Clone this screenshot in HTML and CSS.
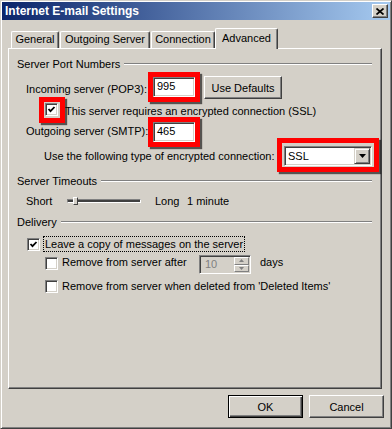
FILE: index.html
```html
<!DOCTYPE html>
<html lang="en">
<head>
  <meta charset="UTF-8">
  <title>Internet E-mail Settings</title>
  <link rel="stylesheet" href="styles.css">
</head>
<body>
<div class="window">
  <div class="titlebar">
    <span class="title">Internet E-mail Settings</span>
    <span class="close">
      <svg width="8" height="7" viewBox="0 0 8 7"><path d="M0.5 0.5 L7.5 6.5 M7.5 0.5 L0.5 6.5" stroke="#000" stroke-width="1.7" fill="none"/></svg>
    </span>
  </div>

  <div class="tabs">
    <div class="tab tab-general">General</div>
    <div class="tab tab-outgoing">Outgoing Server</div>
    <div class="tab tab-connection">Connection</div>
    <div class="tab tab-advanced active">Advanced</div>
  </div>

  <div class="panel">
    <!-- server port numbers -->
    <div class="group g-ports"><span>Server Port Numbers</span><i class="etch"></i></div>

    <div class="row row-in">
      <span class="lbl lbl-port lbl-in">Incoming server (POP3):</span>
      <span class="mark mark-port"><span class="field">995</span></span>
      <span class="btn btn-defaults">Use Defaults</span>
    </div>

    <div class="row row-ssl">
      <span class="mark mark-check"><span class="check on"><svg width="9" height="9" viewBox="0 0 9 9"><polyline points="1.5,4 3.5,6.2 7.5,2" stroke="#000" stroke-width="1.8" fill="none"/></svg></span></span>
      <span class="lbl lbl-ssl">This server requires an encrypted connection (SSL)</span>
    </div>

    <div class="row row-out">
      <span class="lbl lbl-port lbl-out">Outgoing server (SMTP):</span>
      <span class="mark mark-port"><span class="field">465</span></span>
    </div>

    <div class="row row-type">
      <span class="lbl lbl-type">Use the following type of encrypted connection:</span>
      <span class="mark mark-select">
        <span class="select">
          <span class="select-text">SSL</span>
          <span class="drop"><svg width="7" height="4" viewBox="0 0 7 4"><path d="M0 0 H7 L3.5 4 Z" fill="#000"/></svg></span>
        </span>
      </span>
    </div>

    <!-- server timeouts -->
    <div class="group g-timeouts"><span>Server Timeouts</span><i class="etch"></i></div>

    <div class="row row-slider">
      <span class="lbl lbl-short">Short</span>
      <span class="slider"><span class="track"></span><span class="thumb"></span></span>
      <span class="lbl lbl-long">Long</span>
      <span class="lbl">1 minute</span>
    </div>

    <!-- delivery -->
    <div class="group g-delivery"><span>Delivery</span><i class="etch"></i></div>

    <div class="row row-leave">
      <span class="check on"><svg width="9" height="9" viewBox="0 0 9 9"><polyline points="1.5,4 3.5,6.2 7.5,2" stroke="#000" stroke-width="1.8" fill="none"/></svg></span>
      <span class="lbl focus">Leave a copy of messages on the server</span>
    </div>

    <div class="row row-after">
      <span class="check"></span>
      <span class="lbl lbl-after">Remove from server after</span>
      <span class="spin">
        <span class="spin-text">10</span>
        <span class="spin-btns">
          <span class="spin-btn"><svg width="5" height="3" viewBox="0 0 5 3"><path d="M2.5 0 L5 3 H0 Z" fill="#808080"/></svg></span>
          <span class="spin-btn"><svg width="5" height="3" viewBox="0 0 5 3"><path d="M0 0 H5 L2.5 3 Z" fill="#808080"/></svg></span>
        </span>
      </span>
      <span class="lbl lbl-days">days</span>
    </div>

    <div class="row row-deleted">
      <span class="check"></span>
      <span class="lbl lbl-deleted">Remove from server when deleted from 'Deleted Items'</span>
    </div>
  </div>

  <div class="footer">
    <span class="btn btn-ok">OK</span>
    <span class="btn btn-cancel">Cancel</span>
  </div>
</div>
</body>
</html>
```

FILE: styles.css
```css
body {
  margin: 0;
  background: #d4d0c8;
  font-family: "Liberation Sans", Arial, sans-serif;
  font-size: 11px;
  color: #000;
}

.window {
  width: 392px;
  height: 429px;
  box-sizing: border-box;
  padding: 1px;
  background: #d4d0c8;
  border: 1px solid;
  border-color: #d4d0c8 #404040 #404040 #d4d0c8;
  box-shadow: inset 1px 1px 0 #fff, inset -1px -1px 0 #808080;
}

/* title bar */
.titlebar {
  height: 18px;
  display: flex;
  align-items: center;
  justify-content: space-between;
  padding: 0 2px 0 3px;
  background: linear-gradient(to right, #0a246a, #a6caf0);
}
.title {
  color: #fff;
  font-weight: bold;
  font-size: 12px;
  line-height: 14px;
}
.close {
  width: 16px;
  height: 14px;
  box-sizing: border-box;
  display: flex;
  align-items: center;
  justify-content: center;
  background: #d4d0c8;
  border: 1px solid;
  border-color: #fff #404040 #404040 #fff;
  box-shadow: inset -1px -1px 0 #808080;
}

/* tabs */
.tabs {
  display: flex;
  align-items: flex-end;
  height: 21px;
  margin: 8px 0 -1px 9px;
  position: relative;
  z-index: 1;
}
.tab {
  height: 17px;
  box-sizing: border-box;
  margin-bottom: 1px;
  border: 1px solid;
  border-color: #fff #404040 transparent #fff;
  border-bottom: none;
  box-shadow: inset -1px 0 0 #808080;
  border-radius: 2px 2px 0 0;
  text-align: center;
  line-height: 15px;
  background: #d4d0c8;
}
.tab-general { width: 48px; margin-right: 1px; }
.tab-outgoing { width: 90px; margin-right: 1px; }
.tab-connection { width: 64px; }
.tab.active {
  width: 63px;
  height: 21px;
  margin-bottom: 0;
  line-height: 18px;
}

/* panel */
.panel {
  width: 374px;
  height: 341px;
  box-sizing: border-box;
  margin-left: 6px;
  padding: 0 9px 0 8px;
  border: 1px solid;
  border-color: #fff #404040 #404040 #fff;
  box-shadow: inset -1px -1px 0 #808080;
}

.group {
  display: flex;
  align-items: center;
  height: 14px;
  line-height: 14px;
}
.etch {
  flex: 1;
  height: 0;
  margin-left: 4px;
  border-top: 1px solid #808080;
  border-bottom: 1px solid #fff;
}
.g-ports { margin-top: 8px; }
.g-timeouts { margin-top: 2px; }
.g-delivery { margin-top: 5px; }

.row {
  display: flex;
  align-items: flex-start;
}
.lbl {
  line-height: 14px;
  white-space: nowrap;
}

/* red call-out boxes */
.mark {
  display: flex;
  border: 5px solid #ff0000;
  box-shadow: 2px 2px 1px rgba(0, 0, 0, 0.6);
  position: relative;
}

.field {
  width: 42px;
  height: 20px;
  box-sizing: border-box;
  padding-left: 3px;
  line-height: 16px;
  background: #fff;
  border: 1px solid;
  border-color: #808080 #fff #fff #808080;
  box-shadow: inset 1px 1px 0 #404040, inset -1px -1px 0 #d4d0c8;
}

.btn {
  height: 23px;
  box-sizing: border-box;
  display: flex;
  align-items: center;
  justify-content: center;
  background: #d4d0c8;
  border: 1px solid;
  border-color: #fff #404040 #404040 #fff;
  box-shadow: inset -1px -1px 0 #808080;
}

.check {
  width: 13px;
  height: 13px;
  box-sizing: border-box;
  display: flex;
  align-items: center;
  justify-content: center;
  background: #fff;
  border: 1px solid;
  border-color: #808080 #fff #fff #808080;
  box-shadow: inset 1px 1px 0 #404040, inset -1px -1px 0 #d4d0c8;
}

/* incoming / outgoing rows */
.row-in {
  height: 30px;
  margin-top: 1px;
  padding-left: 9px;
}
.lbl-port { width: 122px; }
.lbl-in { margin-top: 10px; }
.btn-defaults {
  width: 78px;
  margin: 4px 0 0 4px;
}

.row-ssl {
  height: 26px;
  margin-top: -5px;
  padding-left: 22px;
}
.mark-check { padding: 1px 2px 2px 1px; }
.lbl-ssl { margin-top: 7px; }

.row-out {
  height: 30px;
  margin-top: -6px;
  padding-left: 9px;
}
.lbl-out { margin-top: 7px; }

.row-type {
  height: 34px;
  margin-top: -9px;
  padding-left: 27px;
}
.lbl-type { margin-top: 11px; }
.mark-select {
  margin: 0 -7px 0 auto;
  padding: 3px 2px 1px 2px;
}
.select {
  width: 88px;
  height: 20px;
  box-sizing: border-box;
  display: flex;
  justify-content: space-between;
  background: #fff;
  border: 1px solid;
  border-color: #808080 #fff #fff #808080;
  box-shadow: inset 1px 1px 0 #404040, inset -1px -1px 0 #d4d0c8;
  padding: 1px;
}
.select-text {
  padding-left: 2px;
  line-height: 16px;
}
.drop {
  width: 16px;
  height: 16px;
  box-sizing: border-box;
  display: flex;
  align-items: center;
  justify-content: center;
  background: #d4d0c8;
  border: 1px solid;
  border-color: #d4d0c8 #404040 #404040 #d4d0c8;
  box-shadow: inset 1px 1px 0 #fff, inset -1px -1px 0 #808080;
}

/* slider */
.row-slider {
  height: 18px;
  margin-top: 4px;
  padding-left: 9px;
  align-items: center;
}
.lbl-short { width: 41px; }
.slider {
  width: 74px;
  height: 18px;
  position: relative;
  display: flex;
  align-items: center;
}
.track {
  width: 100%;
  height: 4px;
  box-sizing: border-box;
  border: 1px solid;
  border-color: #808080 #fff #fff #808080;
  background: #404040;
}
.thumb {
  position: absolute;
  left: 6px;
  top: 5px;
  width: 5px;
  height: 8px;
  box-sizing: border-box;
  background: #d4d0c8;
  border: 1px solid;
  border-color: #fff #404040 #404040 #fff;
}
.lbl-long {
  width: 32px;
  margin-left: 14px;
}

/* delivery */
.row-leave {
  height: 16px;
  margin-top: 7px;
  padding-left: 10px;
}
.row-leave .check { margin: 2px 4px 0 0; }
.focus {
  outline: 1px dotted #000;
  outline-offset: 0;
  margin-top: 1px;
  padding: 0 1px;
}

.row-after {
  height: 20px;
  margin-top: 3px;
  padding-left: 28px;
}
.row-after .check { margin-top: 2px; }
.lbl-after {
  width: 137px;
  margin: 0 0 0 4px;
  line-height: 15px;
}
.spin {
  width: 52px;
  height: 19px;
  box-sizing: border-box;
  display: flex;
  justify-content: space-between;
  padding: 1px;
  border: 1px solid;
  border-color: #808080 #fff #fff #808080;
  box-shadow: inset 1px 1px 0 #404040, inset -1px -1px 0 #d4d0c8;
}
.spin-text {
  color: #808080;
  padding-left: 4px;
  line-height: 15px;
}
.spin-btns {
  width: 15px;
  display: flex;
  flex-direction: column;
}
.spin-btn {
  flex: 1;
  display: flex;
  align-items: center;
  justify-content: center;
  box-sizing: border-box;
  border: 1px solid;
  border-color: #fff #808080 #808080 #fff;
}
.lbl-days { margin-left: 9px; }

.row-deleted {
  height: 14px;
  margin-top: 4px;
  padding-left: 28px;
}
.row-deleted .check { margin-top: 1px; }
.lbl-deleted { margin-left: 4px; }

/* footer buttons */
.footer {
  display: flex;
  justify-content: flex-end;
  gap: 6px;
  margin-top: 6px;
  padding-right: 6px;
}
.btn-ok,
.btn-cancel { width: 75px; }
.btn-ok {
  border-color: #000;
  box-shadow: inset 1px 1px 0 #fff, inset -1px -1px 0 #404040, inset -2px -2px 0 #808080;
}
```
